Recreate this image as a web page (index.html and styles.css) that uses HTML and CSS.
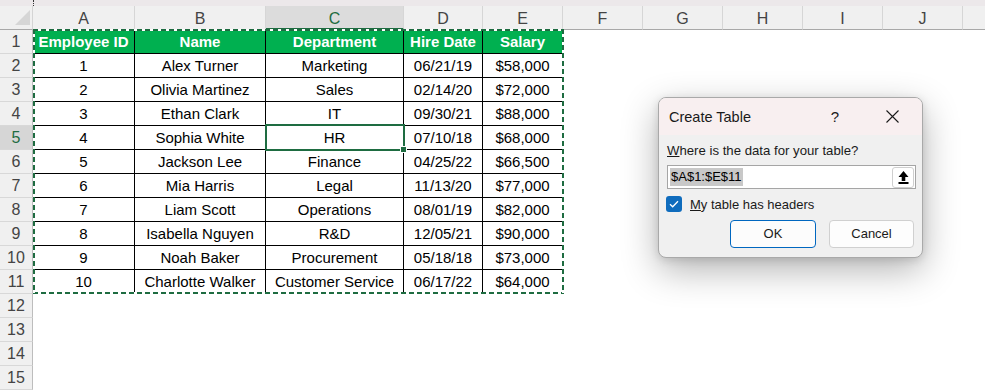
FILE: index.html
```html
<!DOCTYPE html>
<html>
<head>
<meta charset="utf-8">
<link rel="stylesheet" href="styles.css">
</head>
<body>
<div class="band"><span class="band-dot"></span></div>
<div class="sheet">
  <div class="corner"><span class="tri"></span></div>
  <div class="ch">A</div><div class="ch">B</div><div class="ch sel">C</div><div class="ch">D</div><div class="ch">E</div>
  <div class="ch">F</div><div class="ch">G</div><div class="ch">H</div><div class="ch">I</div><div class="ch">J</div><div class="ch last"></div>

  <div class="rh">1</div><div class="c h">Employee ID</div><div class="c h">Name</div><div class="c h">Department</div><div class="c h">Hire Date</div><div class="c h">Salary</div><div class="rest"></div>
  <div class="rh">2</div><div class="c">1</div><div class="c">Alex Turner</div><div class="c">Marketing</div><div class="c">06/21/19</div><div class="c">$58,000</div><div class="rest"></div>
  <div class="rh">3</div><div class="c">2</div><div class="c">Olivia Martinez</div><div class="c">Sales</div><div class="c">02/14/20</div><div class="c">$72,000</div><div class="rest"></div>
  <div class="rh">4</div><div class="c">3</div><div class="c">Ethan Clark</div><div class="c">IT</div><div class="c">09/30/21</div><div class="c">$88,000</div><div class="rest"></div>
  <div class="rh sel">5</div><div class="c">4</div><div class="c">Sophia White</div><div class="c">HR</div><div class="c">07/10/18</div><div class="c">$68,000</div><div class="rest"></div>
  <div class="rh">6</div><div class="c">5</div><div class="c">Jackson Lee</div><div class="c">Finance</div><div class="c">04/25/22</div><div class="c">$66,500</div><div class="rest"></div>
  <div class="rh">7</div><div class="c">6</div><div class="c">Mia Harris</div><div class="c">Legal</div><div class="c">11/13/20</div><div class="c">$77,000</div><div class="rest"></div>
  <div class="rh">8</div><div class="c">7</div><div class="c">Liam Scott</div><div class="c">Operations</div><div class="c">08/01/19</div><div class="c">$82,000</div><div class="rest"></div>
  <div class="rh">9</div><div class="c">8</div><div class="c">Isabella Nguyen</div><div class="c">R&amp;D</div><div class="c">12/05/21</div><div class="c">$90,000</div><div class="rest"></div>
  <div class="rh">10</div><div class="c">9</div><div class="c">Noah Baker</div><div class="c">Procurement</div><div class="c">05/18/18</div><div class="c">$73,000</div><div class="rest"></div>
  <div class="rh">11</div><div class="c">10</div><div class="c">Charlotte Walker</div><div class="c">Customer Service</div><div class="c">06/17/22</div><div class="c">$64,000</div><div class="rest"></div>
  <div class="rh">12</div><div class="rest wide"></div>
  <div class="rh">13</div><div class="rest wide"></div>
  <div class="rh">14</div><div class="rest wide"></div>
  <div class="rh">15</div><div class="rest wide"></div>

  <div class="ants">
    <span class="ant top"></span><span class="ant bottom"></span><span class="ant left"></span><span class="ant right"></span>
  </div>
  <div class="active"><span class="handle"></span></div>
</div>

<div class="dialog">
  <div class="titlebar">
    <div class="title">Create Table</div>
    <div class="help">?</div>
    <div class="close">
      <svg width="13" height="13" viewBox="0 0 13 13"><path d="M0.5 0.5 L12.5 12.5 M12.5 0.5 L0.5 12.5" stroke="#1a1a1a" stroke-width="1.1" fill="none"/></svg>
    </div>
  </div>
  <div class="dbody">
    <div class="label"><u>W</u>here is the data for your table?</div>
    <div class="input">
      <span class="seltext">$A$1:$E$11</span>
      <span class="pick">
        <svg width="11" height="13" viewBox="0 0 11 13"><path d="M5.5 0 L10.5 6 L7.3 6 L7.3 10 L3.7 10 L3.7 6 L0.5 6 Z" fill="#000"/><rect x="0.5" y="11" width="10" height="2" fill="#000"/></svg>
      </span>
    </div>
    <div class="checkrow">
      <span class="box">
        <svg width="10" height="8" viewBox="0 0 10 8"><path d="M1 4.2 L3.7 6.8 L9 1.2" stroke="#fff" stroke-width="1.3" fill="none"/></svg>
      </span>
      <span class="clabel"><u>M</u>y table has headers</span>
    </div>
    <div class="buttons">
      <div class="btn primary">OK</div>
      <div class="btn">Cancel</div>
    </div>
  </div>
</div>
</body>
</html>
```

FILE: styles.css
```css
html, body {
  margin: 0;
  padding: 0;
  background: #ffffff;
  overflow: hidden;
  font-family: "Liberation Sans", Arial, sans-serif;
}

.band {
  height: 6px;
  background: #ece8ea;
  position: relative;
}
.band-dot {
  position: absolute;
  left: 33px;
  top: 0;
  height: 6px;
  border-left: 1px dotted #333;
}

.sheet {
  position: relative;
  display: grid;
  grid-template-columns: 33px 102px 131px 138px 79px 80px 80px 80px 80px 80px 80px 1fr;
  grid-auto-rows: 24px;
  font-size: 15px;
  color: #000;
}

.corner {
  background: #f0f0f0;
  border-right: 1px solid #d4d4d4;
  border-bottom: 1px solid #a8a8a8;
  position: relative;
  height: 24px;
  box-sizing: border-box;
}
.tri {
  position: absolute;
  left: 15px;
  top: 4px;
  width: 15px;
  height: 15px;
  background: #d6d6d6;
  clip-path: polygon(100% 0, 100% 100%, 0 100%);
}

.ch {
  background: #f0f0f0;
  border-right: 1px solid #d6d6d6;
  border-bottom: 1px solid #a8a8a8;
  box-sizing: border-box;
  text-align: center;
  line-height: 25px;
  color: #444;
  font-size: 16px;
}
.ch.sel {
  background: #dcdcdc;
  color: #1e6c41;
  border-bottom: 2px solid #1e6c41;
}
.ch.last {
  border-right: none;
}

.rh {
  background: #f0f0f0;
  border-right: 1px solid #bdbdbd;
  border-bottom: 1px solid #d8d8d8;
  box-sizing: border-box;
  text-align: center;
  line-height: 24px;
  color: #444;
  font-size: 16px;
}
.rh.sel {
  background: #d6d6d6;
  color: #1e6c41;
}

.c {
  border-right: 1px solid #000;
  border-bottom: 1px solid #000;
  box-sizing: border-box;
  text-align: center;
  line-height: 24px;
  white-space: nowrap;
  overflow: hidden;
}
.c.h {
  background: #00b050;
  color: #fff;
  font-weight: bold;
}

.rest {
  grid-column: 7 / -1;
  background: #fff;
}
.rest.wide {
  grid-column: 2 / -1;
}

.ants {
  position: absolute;
  left: 33px;
  top: 23px;
  width: 531px;
  height: 265px;
}
.ant {
  position: absolute;
}
.ant.top, .ant.bottom {
  left: 0;
  right: 0;
  height: 2px;
  background: repeating-linear-gradient(90deg, #1e6c41 0 5px, #ffffff 5px 8px);
}
.ant.top { top: 0; }
.ant.bottom { bottom: 0; }
.ant.left, .ant.right {
  top: 0;
  bottom: 0;
  width: 2px;
  background: repeating-linear-gradient(180deg, #1e6c41 0 5px, #ffffff 5px 8px);
}
.ant.left { left: 0; }
.ant.right { right: 0; }

.active {
  position: absolute;
  left: 265px;
  top: 118px;
  width: 140px;
  height: 27px;
  border: 2px solid #1e6c41;
  box-sizing: border-box;
}
.handle {
  position: absolute;
  right: -4px;
  bottom: -4px;
  width: 5px;
  height: 5px;
  background: #1e6c41;
  border: 1px solid #fff;
}

/* Dialog */
.dialog {
  position: absolute;
  left: 658px;
  top: 97px;
  width: 265px;
  height: 161px;
  box-sizing: border-box;
  border: 1px solid #a9a9a9;
  border-radius: 8px;
  background: #f0f0f0;
  box-shadow: 0 12px 36px rgba(0, 0, 0, 0.3), 0 2px 8px rgba(0, 0, 0, 0.12);
  overflow: hidden;
  font-size: 13px;
  color: #000;
  display: flex;
  flex-direction: column;
}
.titlebar {
  height: 37px;
  background: #f8eff0;
  display: flex;
  align-items: center;
  flex-shrink: 0;
}
.title {
  flex: 1;
  padding-left: 10px;
  font-size: 14.5px;
  color: #1a1a1a;
  padding-top: 1px;
}
.help {
  width: 40px;
  margin-right: 14px;
  text-align: center;
  font-size: 15px;
  color: #1a1a1a;
}
.close {
  width: 46px;
  margin-right: 7px;
  display: flex;
  justify-content: center;
  align-items: center;
}

.dbody {
  padding: 8px 6px 0 8px;
  display: flex;
  flex-direction: column;
}
.label {
  height: 16px;
  line-height: 16px;
  color: #1a1a1a;
  font-size: 13.2px;
}
.input {
  margin-top: 6px;
  height: 24px;
  box-sizing: border-box;
  border: 1px solid #a5a5a5;
  background: #fff;
  display: flex;
  align-items: center;
  padding-left: 2px;
  padding-right: 1px;
}
.seltext {
  background: #c8c8c8;
  height: 18px;
  line-height: 18px;
  padding: 0 1px;
  flex: none;
}
.pick {
  margin-left: auto;
  width: 22px;
  height: 21px;
  box-sizing: border-box;
  border: 1px solid #cfcfcf;
  border-radius: 3px;
  background: #fff;
  display: flex;
  align-items: center;
  justify-content: center;
}
.checkrow {
  margin-top: 7px;
  height: 16px;
  display: flex;
  align-items: center;
}
.box {
  width: 16px;
  height: 16px;
  margin-left: -1px;
  border-radius: 3px;
  background: #0f6cbd;
  display: flex;
  align-items: center;
  justify-content: center;
}
.clabel {
  margin-left: 8px;
  color: #1a1a1a;
}
.buttons {
  margin-top: 8px;
  margin-right: 2px;
  display: flex;
  justify-content: flex-end;
  gap: 13px;
}
.btn {
  width: 85px;
  height: 28px;
  box-sizing: border-box;
  border: 1px solid #d0d0d0;
  border-radius: 4px;
  background: #fdfdfd;
  text-align: center;
  line-height: 26px;
  color: #1a1a1a;
}
.btn.primary {
  width: 86px;
  border-color: #0067c0;
  background: #fcfcfc;
}
```
